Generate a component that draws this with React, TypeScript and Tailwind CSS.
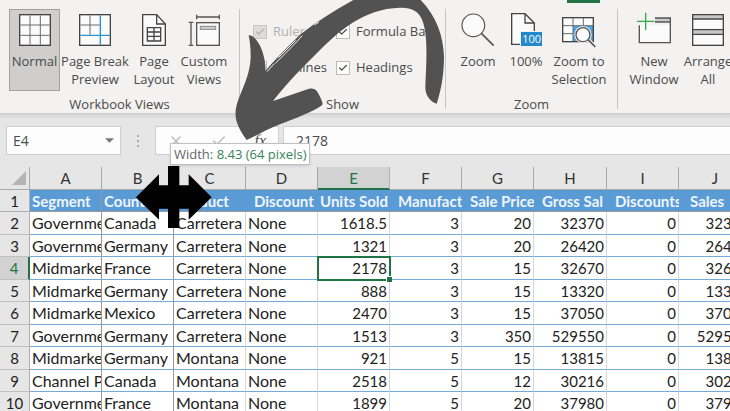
import React from 'react';
import { X, Check } from 'lucide-react';

interface ToolButtonProps {
  icon: React.ReactNode;
  lines: string[];
  className: string;
  active?: boolean;
}

const ToolButton: React.FC<ToolButtonProps> = ({ icon, lines, className, active }) => (
  <button
    className={`flex h-[82px] shrink-0 flex-col items-center border pt-[3px] text-[13px] leading-[18px] whitespace-nowrap ${
      active ? 'border-[#a3a2a1] bg-[#cfcecd]' : 'border-transparent'
    } ${className}`}
  >
    <span className="mb-[5px] flex h-[34px] shrink-0 items-center justify-center">{icon}</span>
    {lines.map(line => (
      <span key={line}>{line}</span>
    ))}
  </button>
);

interface GroupProps {
  label: string;
  className: string;
  children: React.ReactNode;
}

const Group: React.FC<GroupProps> = ({ label, className, children }) => (
  <section className={`flex h-[100px] shrink-0 flex-col justify-between border-r border-[#c6c5c4] ${className}`}>
    {children}
    <h2 className="text-center text-[13px] leading-[10px]">{label}</h2>
  </section>
);

interface OptionProps {
  label: string;
  disabled?: boolean;
}

const Option: React.FC<OptionProps> = ({ label, disabled }) => (
  <label className={`flex items-center gap-1.5 text-[13px] whitespace-nowrap ${disabled ? 'text-[#b1b0af]' : ''}`}>
    <span className="grid shrink-0 place-items-center">
      <input
        type="checkbox"
        defaultChecked
        disabled={disabled}
        className={`col-start-1 row-start-1 h-[14px] w-[14px] appearance-none border ${
          disabled ? 'border-[#c8c7c6] bg-[#dddcdb]' : 'border-[#bdbcbb] bg-white'
        }`}
      />
      <Check className="pointer-events-none col-start-1 row-start-1 h-[10px] w-[10px]" strokeWidth={3} />
    </span>
    {label}
  </label>
);

const NormalIcon = () => (
  <svg width="32" height="32" viewBox="0 0 96 96" fill="none">
    <rect x="2" y="2" width="92" height="92" fill="#fbfbfb" stroke="#444" strokeWidth="4" />
    <path d="M33 4V92M64 4V92M4 33H92M4 64H92" stroke="#6a6a6a" strokeWidth="3" />
  </svg>
);

const PageBreakIcon = () => (
  <svg width="32" height="32" viewBox="0 0 96 96" fill="none">
    <rect x="2" y="2" width="92" height="92" fill="#fbfbfb" stroke="#444" strokeWidth="4" />
    <path d="M33 4V62M4 33H62" stroke="#6a6a6a" strokeWidth="3" />
    <path d="M64 4V92M4 64H92" stroke="#2b93d1" strokeWidth="4" />
  </svg>
);

const PageLayoutIcon = () => (
  <svg width="24" height="32" viewBox="0 0 72 96" fill="none">
    <path d="M2 2H44L70 30V94H2Z" fill="#fbfbfb" stroke="#444" strokeWidth="4" />
    <path d="M44 2V30H70" stroke="#444" strokeWidth="4" />
    <path d="M16 41H56V81H16ZM16 54H56M16 67H56M36 41V81" stroke="#444" strokeWidth="4" />
  </svg>
);

const CustomViewsIcon = () => (
  <svg width="32" height="32" viewBox="0 0 96 96" fill="none" stroke="#555" strokeWidth="4">
    <path d="M26 9H94M26 2V16M94 2V16M9 25V94M2 25H16M2 94H16" />
    <rect x="26" y="26" width="68" height="68" fill="#fbfbfb" />
    <rect x="37" y="37" width="46" height="9" fill="#d0d0d0" stroke="#888" strokeWidth="3" />
  </svg>
);

const ZoomIcon = () => (
  <svg width="34" height="34" viewBox="0 0 102 102" fill="none" stroke="#555">
    <path d="M62 62L98 98" strokeWidth="5" />
    <circle cx="37" cy="37" r="34" fill="#fbfbfb" strokeWidth="3.5" />
  </svg>
);

const ZoomFullIcon = () => (
  <span className="grid h-[34px] w-[34px]">
    <svg className="col-start-1 row-start-1" width="26" height="32" viewBox="0 0 78 96" fill="none" stroke="#444" strokeWidth="4">
      <path d="M8 2H48L76 30V94H8Z" fill="#fbfbfb" />
      <path d="M48 2V30H76" />
    </svg>
    <span className="col-start-1 row-start-1 self-end justify-self-end border border-[#f3f2f1] bg-[#2488cc] px-px text-[11px] leading-[14px] text-white">
      100
    </span>
  </span>
);

const ZoomSelectionIcon = () => (
  <svg width="34" height="32" viewBox="0 0 102 96" fill="none" className="overflow-visible">
    <rect x="2" y="11" width="92" height="72" fill="#fbfbfb" />
    <path d="M33 36H94V83H33Z" fill="#4aa5e2" />
    <path d="M33 11V83M64 11V36M2 35H94M2 59H33" stroke="#6a6a6a" strokeWidth="3" />
    <rect x="2" y="11" width="92" height="72" stroke="#444" strokeWidth="4" />
    <circle cx="63" cy="62" r="26" fill="#f3f2f1" />
    <path d="M78 77L98 97" stroke="#f3f2f1" strokeWidth="12" />
    <path d="M78 77L100 99" stroke="#555" strokeWidth="5" />
    <circle cx="63" cy="62" r="21" fill="#fbfbfb" stroke="#555" strokeWidth="4" />
  </svg>
);

const NewWindowIcon = () => (
  <svg width="34" height="32" viewBox="0 0 102 96" fill="none" className="overflow-visible">
    <path d="M7 34H99V86H7Z" fill="#fbfbfb" />
    <path d="M54 11H100V24H54Z" fill="#c8c8c8" />
    <path d="M54 12H100V86H7V34M54 24H100" stroke="#555" strokeWidth="4" />
    <path d="M26 -4V48M0 22H52" stroke="#36a852" strokeWidth="4" />
  </svg>
);

const ArrangeIcon = () => (
  <svg width="32" height="32" viewBox="0 0 96 96" fill="none" stroke="#444" strokeWidth="4">
    <rect x="2" y="2" width="92" height="92" fill="#fbfbfb" />
    <path d="M2 2H94V15H2ZM2 47H94V61H2Z" fill="#c8c8c8" />
  </svg>
);

const Ribbon = () => (
  <header className="h-[114px] shrink-0 overflow-hidden border-b border-[#cfcecd] bg-[#f3f2f1]">
    <div className="flex h-[9px] pl-[567px]">
      <span className="h-[3px] w-[33px] bg-[#217346]" />
    </div>
    <div className="flex">
      <Group label="Workbook Views" className="w-[240px]">
        <div className="flex pl-[9px]">
          <ToolButton icon={<NormalIcon />} lines={['Normal']} className="w-[51px]" active />
          <ToolButton icon={<PageBreakIcon />} lines={['Page Break', 'Preview']} className="w-[70px]" />
          <ToolButton icon={<PageLayoutIcon />} lines={['Page', 'Layout']} className="w-[48px]" />
          <ToolButton icon={<CustomViewsIcon />} lines={['Custom', 'Views']} className="w-[52px]" />
        </div>
      </Group>
      <Group label="Show" className="w-[206px]">
        <div className="grid grid-cols-[83px_auto] grid-rows-[36px_36px] pt-[5px] pl-[13px]">
          <Option label="Ruler" disabled />
          <Option label="Formula Bar" />
          <Option label="Gridlines" />
          <Option label="Headings" />
        </div>
      </Group>
      <Group label="Zoom" className="w-[172px]">
        <div className="flex pl-[8px]">
          <ToolButton icon={<ZoomIcon />} lines={['Zoom']} className="w-[48px]" />
          <ToolButton icon={<ZoomFullIcon />} lines={['100%']} className="w-[48px]" />
          <ToolButton icon={<ZoomSelectionIcon />} lines={['Zoom to', 'Selection']} className="w-[58px]" />
        </div>
      </Group>
      <Group label="" className="w-[240px]">
        <div className="flex pl-[8px]">
          <ToolButton icon={<NewWindowIcon />} lines={['New', 'Window']} className="w-[56px]" />
          <ToolButton icon={<ArrangeIcon />} lines={['Arrange', 'All']} className="w-[52px]" />
        </div>
      </Group>
    </div>
  </header>
);

const FormulaBar = () => (
  <div className="flex h-[53px] shrink-0 bg-linear-to-b from-[#d4d4d4] to-[#e6e6e6] to-10% pt-3 pl-[6px]">
    <div className="flex h-[29px] w-[115px] shrink-0 items-center border border-[#cfcfcf] bg-[#fdfdfd] px-1.5">
      <input aria-label="Name box" defaultValue="E4" className="w-full min-w-0 text-[14px] outline-none" />
      <button aria-label="Open name list">
        <svg width="9" height="5" viewBox="0 0 10 5" fill="#777">
          <path d="M0 0H10L5 5Z" />
        </svg>
      </button>
    </div>
    <div className="flex h-[29px] w-[34px] shrink-0 flex-col items-center justify-center gap-[3px]">
      <i className="h-[2px] w-[2px] bg-[#aaa]" />
      <i className="h-[2px] w-[2px] bg-[#aaa]" />
      <i className="h-[2px] w-[2px] bg-[#aaa]" />
    </div>
    <div className="flex h-[29px] w-[124px] shrink-0 items-center justify-between border border-[#cfcfcf] bg-[#fdfdfd] px-3 text-[#bbb]">
      <button aria-label="Cancel">
        <X className="h-4 w-4" />
      </button>
      <button aria-label="Enter">
        <Check className="h-4 w-4" />
      </button>
      <button aria-label="Insert function" className="font-['Liberation_Serif',serif] text-[16px] text-[#555] italic">
        fx
      </button>
    </div>
    <input
      aria-label="Formula bar"
      defaultValue="2178"
      className="ml-1 h-[29px] min-w-0 flex-1 border border-r-0 border-[#cfcfcf] bg-[#fdfdfd] pl-3 text-[14px] outline-none"
    />
  </div>
);

const COLUMNS = [
  { letter: 'A', title: 'Segment', width: 'w-[72px]', head: 'pl-[2px]' },
  { letter: 'B', title: 'Country', width: 'w-[72px]', head: 'pl-[2px]' },
  { letter: 'C', title: 'Product', width: 'w-[72px]', head: 'pl-[2px]' },
  { letter: 'D', title: 'Discount', width: 'w-[72px]', head: 'pl-[8px]' },
  { letter: 'E', title: 'Units Sold', width: 'w-[72px]', head: 'pl-[2px]' },
  { letter: 'F', title: 'Manufact', width: 'w-[72px]', head: 'pl-[8px]' },
  { letter: 'G', title: 'Sale Price', width: 'w-[72px]', head: 'pl-[8px]' },
  { letter: 'H', title: 'Gross Sal', width: 'w-[73px]', head: 'pl-[8px]' },
  { letter: 'I', title: 'Discounts', width: 'w-[72px]', head: 'pl-[8px]' },
  { letter: 'J', title: 'Sales', width: 'w-[73px]', head: 'pl-[11px]' },
];

const ROWS = [
  ['Government', 'Canada', 'Carretera', 'None', '1618.5', '3', '20', '32370', '0', '32370'],
  ['Government', 'Germany', 'Carretera', 'None', '1321', '3', '20', '26420', '0', '26420'],
  ['Midmarket', 'France', 'Carretera', 'None', '2178', '3', '15', '32670', '0', '32670'],
  ['Midmarket', 'Germany', 'Carretera', 'None', '888', '3', '15', '13320', '0', '13320'],
  ['Midmarket', 'Mexico', 'Carretera', 'None', '2470', '3', '15', '37050', '0', '37050'],
  ['Government', 'Germany', 'Carretera', 'None', '1513', '3', '350', '529550', '0', '529550'],
  ['Midmarket', 'Germany', 'Montana', 'None', '921', '5', '15', '13815', '0', '13815'],
  ['Channel Partners', 'Canada', 'Montana', 'None', '2518', '5', '12', '30216', '0', '30216'],
  ['Government', 'France', 'Montana', 'None', '1899', '5', '20', '37980', '0', '37980'],
];

const SELECTED_ROW = 4;
const SELECTED_COL = 4;

const Sheet = () => (
  <table className="w-[752px] table-fixed border-separate border-spacing-0 bg-white font-[Lato,sans-serif] text-[#222]">
    <thead>
      <tr className="h-[23px] bg-[#e6e6e6] text-[15px] leading-[20px] text-[#333]">
        <td className="w-[30px] border-r border-b border-[#aaa] p-0">
          <svg className="mr-[3px] ml-auto" width="14" height="14" viewBox="0 0 14 14" fill="#b4b4b4">
            <path d="M14 0V14H0Z" />
          </svg>
        </td>
        {COLUMNS.map((col, i) => (
          <th
            key={col.letter}
            scope="col"
            className={`border-r p-0 text-center font-normal ${col.width} ${
              i === SELECTED_COL
                ? 'border-b-2 border-r-[#b5b5b5] border-b-[#217346] bg-[#d2d2d2] text-[#217346]'
                : 'border-b border-[#a8a8a8]'
            }`}
          >
            {col.letter}
          </th>
        ))}
      </tr>
    </thead>
    <tbody>
      <tr className="h-[22px] text-[15px] leading-[20px]">
        <th scope="row" className="border-r border-b border-[#b0b0b0] bg-[#e6e6e6] p-0 font-normal">1</th>
        {COLUMNS.map((col, i) => (
          <th
            key={col.letter}
            className={`overflow-hidden border-b border-b-[#9a9a9a] bg-[#5b9bd5] p-0 text-left font-bold whitespace-nowrap text-[#eef5fc] ${
              i < 2 ? 'border-r border-r-[#999]' : ''
            } ${col.head}`}
          >
            {col.title}
          </th>
        ))}
      </tr>
      {ROWS.map((row, r) => {
        const number = r + 2;
        const rowSelected = number === SELECTED_ROW;
        return (
          <tr key={number} className="leading-[20px] odd:h-[22px] even:h-[23px]">
            <th
              scope="row"
              className={`border-b border-b-[#c0c0c0] p-0 text-[15px] font-normal ${
                rowSelected
                  ? 'border-r-2 border-r-[#217346] bg-[#d2d2d2] text-[#217346]'
                  : 'border-r border-r-[#b0b0b0] bg-[#e6e6e6]'
              }`}
            >
              {number}
            </th>
            {row.map((value, c) => {
              const selected = rowSelected && c === SELECTED_COL;
              return (
                <td
                  key={c}
                  className={`border-r border-b border-b-[#76aadb] p-0 whitespace-nowrap ${
                    c < 2 ? 'border-r-[#999]' : 'border-r-[#d6d6d6]'
                  } ${c < 4 ? 'pl-[2px] text-[16px]' : 'pr-[2px] text-right text-[15px]'} ${
                    selected ? 'relative outline-2 -outline-offset-1 outline-[#217346]' : 'overflow-hidden'
                  }`}
                >
                  {value}
                  {selected && (
                    <i className="absolute -right-[3px] -bottom-[3px] h-[6px] w-[6px] border-t border-l border-white bg-[#217346]" />
                  )}
                </td>
              );
            })}
          </tr>
        );
      })}
    </tbody>
  </table>
);

// Hand-drawn arrow pointing at the width tooltip
const Arrow = () => (
  <svg
    className="pointer-events-none absolute top-0 left-[230px]"
    width="220"
    height="170"
    viewBox="0 0 660 510"
    fill="none"
  >
    <path
      d="M50 420C27 388 14 363 17 333C22 286 60 240 62 170C62 142 59 121 56 106C79 105 106 154 107 212C143 169 175 139 210 104C260 65 310 34 370 0H572C620 50 640 108 642 170C642 230 631 278 620 311C600 305 585 283 586 260C588 200 595 120 580 70C570 31 542 22 510 23C400 25 321 99 270 150C220 200 170 250 129 303L235 267C254 262 261 271 270 290C276 303 280 309 276 316C250 335 190 358 150 373C110 388 83 405 50 420Z"
      fill="#525252"
    />
    <path
      d="M112 214L132 192M136 190L186 140L216 108M146 172L196 122M254 74L266 67"
      stroke="#f3f2f1"
      strokeWidth="3"
      strokeLinecap="round"
    />
  </svg>
);

const ResizeCursor = () => (
  <svg
    className="pointer-events-none absolute top-[166px] left-[136px]"
    width="76"
    height="62"
    viewBox="408 153 228 186"
  >
    <path d="M408 247L477 178V211H504V153H538V211H566V178L635 247L566 314V281H538V339H504V281H477V314Z" />
  </svg>
);

export default function App() {
  return (
    <main className="relative flex h-screen flex-col overflow-hidden bg-[#e6e6e6] font-['Open_Sans',sans-serif] text-[#4a4a4a]">
      <Ribbon />
      <FormulaBar />
      <Sheet />
      <Arrow />
      <div
        role="tooltip"
        className="absolute top-[143px] left-[170px] border border-[#c0c0c0] bg-white px-[3px] text-[13px] leading-[20px] whitespace-nowrap text-[#666] shadow-sm"
      >
        Width: <span className="text-[#37835a]">8.43 (64 pixels)</span>
      </div>
      <ResizeCursor />
    </main>
  );
}
